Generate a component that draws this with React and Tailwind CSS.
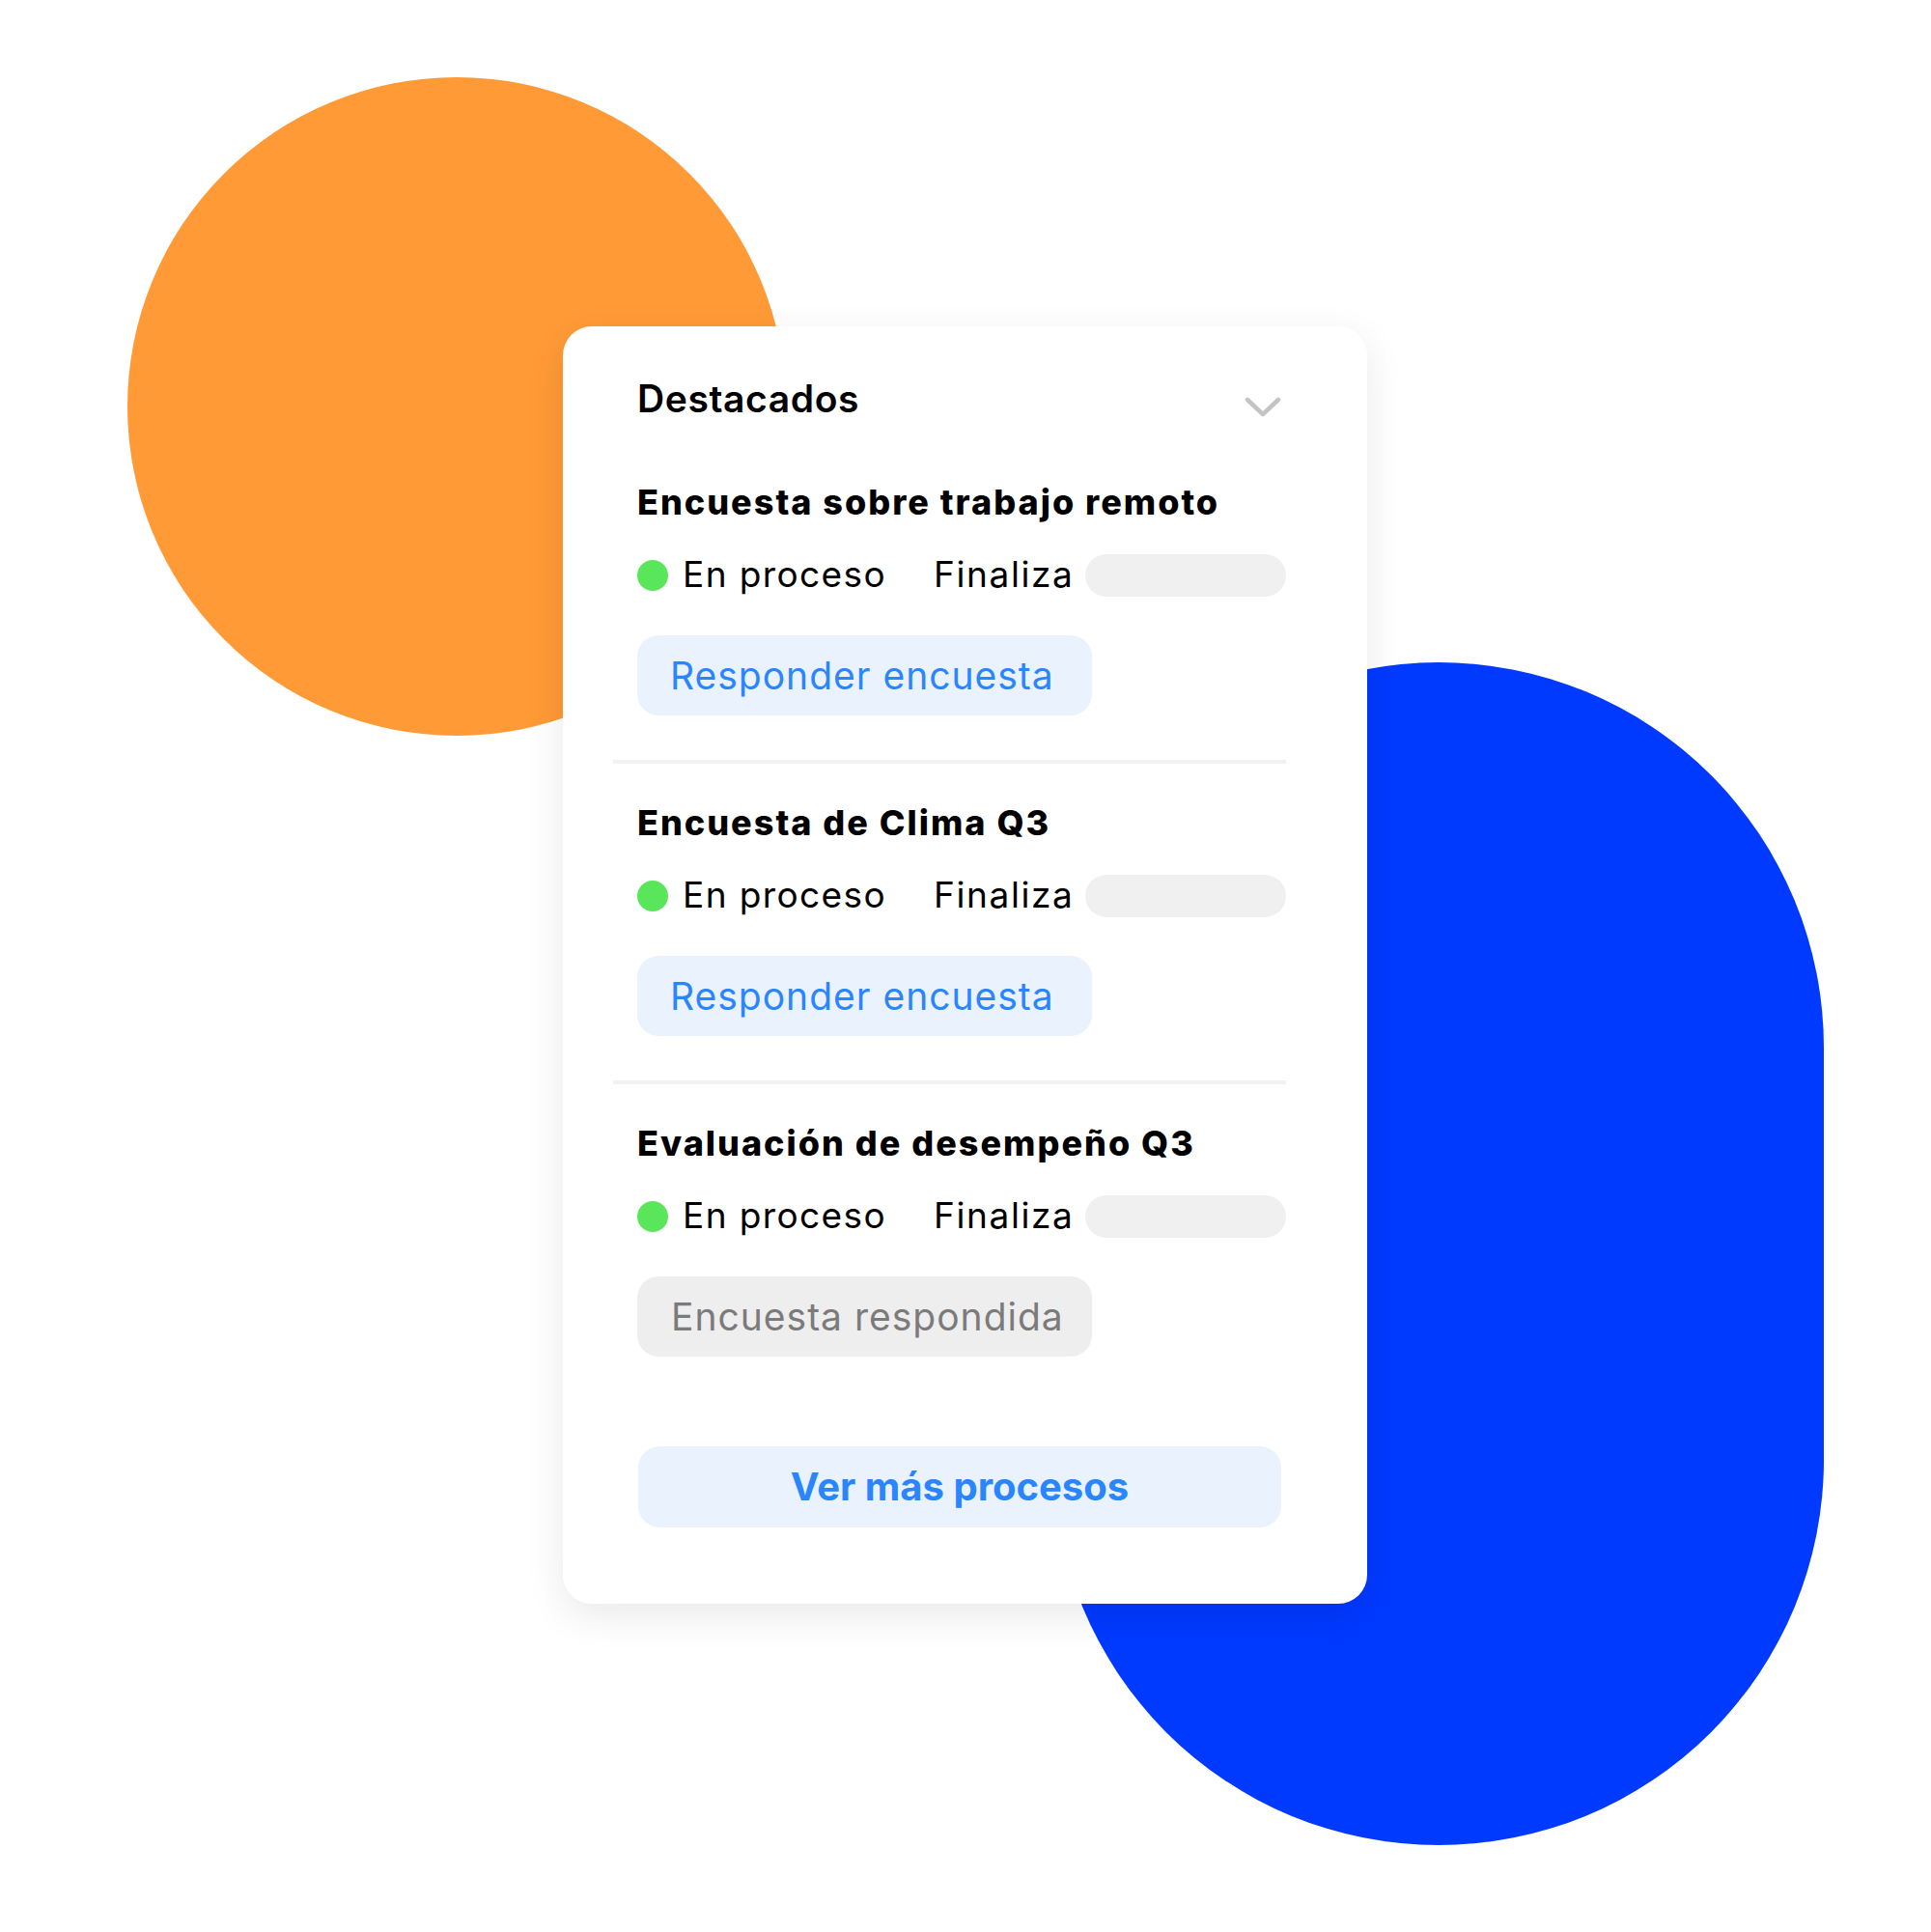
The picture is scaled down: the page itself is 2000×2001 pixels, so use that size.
const surveys = [
  { id: 1, title: 'Encuesta sobre trabajo remoto', answered: false },
  { id: 2, title: 'Encuesta de Clima Q3', answered: false },
  { id: 3, title: 'Evaluación de desempeño Q3', answered: true },
];

function Survey({ survey }) {
  return (
    <div className="pl-[25px]">
      <h3 className="text-[36px] leading-none font-extrabold text-black tracking-[2px] -mt-[1px] whitespace-nowrap">{survey.title}</h3>

      {/* Status row */}
      <div className="mt-[36px] flex items-center h-[44px] whitespace-nowrap">
        <span className="shrink-0 w-[32px] h-[32px] rounded-full bg-[#5AE65A]" />
        <span className="shrink-0 ml-[15px] text-[37px] leading-none text-black tracking-[1.4px] -mt-[3px]">En proceso</span>
        <span className="shrink-0 ml-[49px] text-[37px] leading-none text-black tracking-[1.6px] -mt-[3px]">Finaliza</span>
        <span className="shrink-0 ml-[12px] w-[208px] h-[44px] rounded-full bg-[#F0F0F0]" />
      </div>

      {survey.answered ? (
        <div className="mt-[40px] w-[471px] h-[83px] rounded-[22px] bg-[#EEEEEE] pl-[35px] flex items-center text-[39px] leading-none text-[#7B7B7B] tracking-[1px] whitespace-nowrap">
          Encuesta respondida
        </div>
      ) : (
        <button className="mt-[40px] w-[471px] h-[83px] rounded-[22px] bg-[#EAF2FE] pl-[34px] flex items-center text-[39px] leading-none text-[#2A86FF] tracking-[1px] whitespace-nowrap">
          Responder encuesta
        </button>
      )}
    </div>
  );
}

export default function App() {
  return (
    <div className="relative w-[2000px] h-[2001px] overflow-hidden bg-white font-['Inter',sans-serif]">
      {/* Background shapes */}
      <div className="absolute left-[132px] top-[80px] w-[682px] h-[682px] rounded-full bg-[#FF9A36]" />
      <div className="absolute left-[1091px] top-[686px] w-[798px] h-[1225px] rounded-full bg-[#0039FF]" />

      <div className="relative pl-[583px] pt-[338px]">
        <div className="w-[833px] rounded-[30px] bg-white shadow-[0_12px_40px_rgba(0,0,0,0.09)] pl-[52px] pr-[84px] pt-[55px] pb-[79px]">
          {/* Header */}
          <div className="pl-[25px] pr-[5px] flex items-start justify-between">
            <h2 className="text-[39px] leading-none font-semibold text-black tracking-[0.6px]">Destacados</h2>
            <svg width="38" height="21" viewBox="0 0 38 21" className="mt-[18px]">
              <polyline points="3,3 19,18 35,3" fill="none" stroke="#C4C4C4" strokeWidth="4.5" strokeLinecap="round" strokeLinejoin="round" />
            </svg>
          </div>

          <div className="mt-[71px]">
            {surveys.map((s, i) => (
              <div key={s.id}>
                <Survey survey={s} />
                {i < surveys.length - 1 && <div className="mt-[46px] mb-[44px] h-[4px] bg-[#F2F2F2]" />}
              </div>
            ))}
          </div>

          <div className="mt-[93px] pl-[26px] pr-[5px]">
            <button className="w-full h-[84px] rounded-[22px] bg-[#EAF2FE] text-[40px] leading-none font-bold text-[#2A86FF]">
              Ver más procesos
            </button>
          </div>
        </div>
      </div>
    </div>
  );
}
